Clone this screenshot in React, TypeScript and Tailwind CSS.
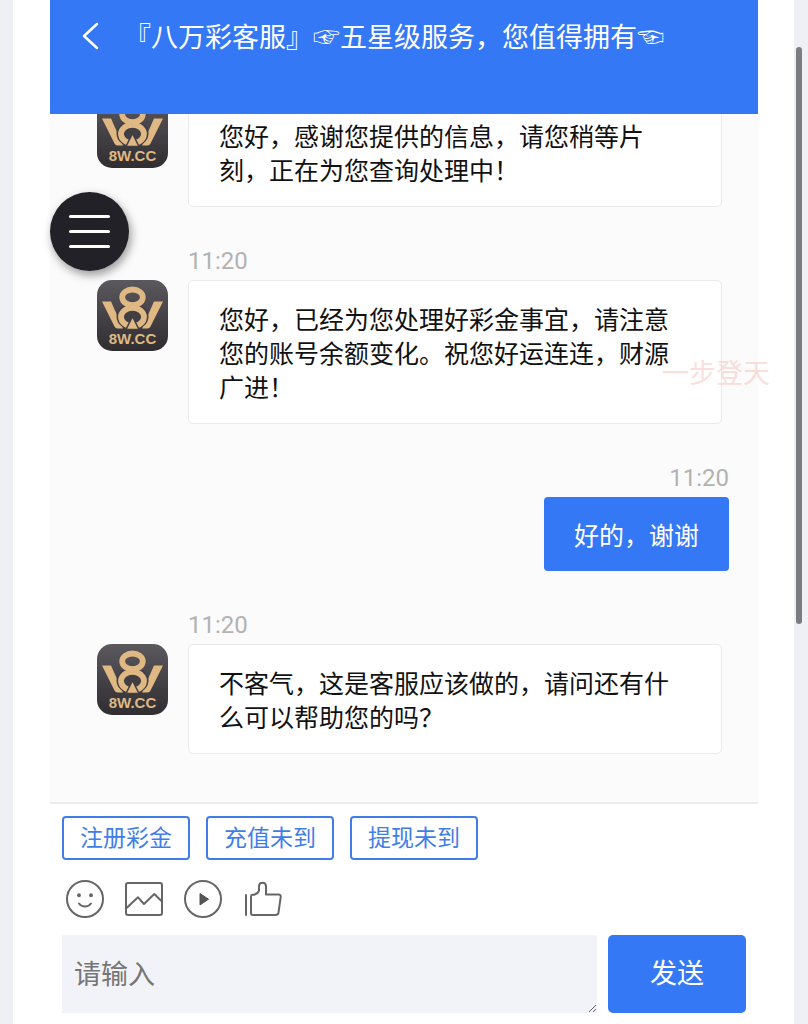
import React from "react";

type Message = {
  id: number;
  from: "agent" | "user";
  time?: string;
  text: string;
};

const messages: Message[] = [
  { id: 1, from: "agent", text: "您好，感谢您提供的信息，请您稍等片刻，正在为您查询处理中！" },
  { id: 2, from: "agent", time: "11:20", text: "您好，已经为您处理好彩金事宜，请注意您的账号余额变化。祝您好运连连，财源广进！" },
  { id: 3, from: "user", time: "11:20", text: "好的，谢谢" },
  { id: 4, from: "agent", time: "11:20", text: "不客气，这是客服应该做的，请问还有什么可以帮助您的吗？" },
];

const quickReplies = ["注册彩金", "充值未到", "提现未到"];

function Avatar() {
  return (
    <svg viewBox="0 0 71 71" className="size-[71px] shrink-0" role="img" aria-label="8W.CC">
      <defs>
        <linearGradient id="avatar-bg" x1="0" y1="0" x2="0" y2="1">
          <stop offset="0" stopColor="#5b595d" />
          <stop offset="0.6" stopColor="#403e42" />
          <stop offset="1" stopColor="#302e31" />
        </linearGradient>
      </defs>
      <rect width="71" height="71" rx="15" fill="url(#avatar-bg)" />
      <g fill="#dfb883">
        <path d="M5 21.5H14L26 48.5H20.500Q18.500 48.500 17.500 46.500Z" />
        <path d="M66 21.5H57L45 48.5H50.500Q52.500 48.500 53.500 46.500Z" />
      </g>
      <ellipse cx="35.500" cy="36.500" rx="16" ry="13.500" fill="#413f43" />
      <ellipse cx="35.500" cy="37" rx="11.500" ry="9.200" fill="none" stroke="#dfb883" strokeWidth="5.800" />
      <ellipse cx="35.500" cy="17.300" rx="10.300" ry="7.800" fill="none" stroke="#dfb883" strokeWidth="5.800" />
      <path d="M35.500 36.500L42 49.500H29Z" fill="#dfb883" stroke="#413f43" strokeWidth="1.500" />
      <text
        x="35.500"
        y="64"
        textAnchor="middle"
        className="fill-[#dfb883] font-['Liberation_Sans',sans-serif] text-[15px] font-bold"
      >
        8W.CC
      </text>
    </svg>
  );
}

function MessageRow({ message }: { message: Message }) {
  if (message.from === "user") {
    return (
      <article className="mt-9 flex flex-col items-end">
        <time className="font-[Roboto,sans-serif] text-[24px] leading-[37px] text-[#b2b2b2]">{message.time}</time>
        <p className="rounded-[4px] bg-[#3478f6] px-[30px] py-5 text-white">{message.text}</p>
      </article>
    );
  }
  return (
    <article className="mt-9">
      {message.time && (
        <time className="block pl-[91px] font-[Roboto,sans-serif] text-[24px] leading-[37px] text-[#b2b2b2]">
          {message.time}
        </time>
      )}
      <div className="flex items-start gap-5">
        <Avatar />
        <p className="mr-[7px] min-w-0 flex-1 rounded-[5px] border border-[#ebebeb] bg-white px-[30px] py-5 text-[#111]">
          {message.text}
        </p>
      </div>
    </article>
  );
}

const iconClass = "size-[40px]";

function SmileIcon() {
  return (
    <svg viewBox="0 0 40 40" className={iconClass} fill="none" stroke="#666" strokeWidth="2" strokeLinecap="round" aria-hidden="true">
      <circle cx="20" cy="20" r="18" />
      <path d="M14 24.500C17 28.500 23 28.500 26 24.500" />
      <circle cx="14" cy="16.300" r="1.200" fill="#666" strokeWidth="1.500" />
      <circle cx="26" cy="16.300" r="1.200" fill="#666" strokeWidth="1.500" />
    </svg>
  );
}

function ImageIcon() {
  return (
    <svg viewBox="0 0 40 40" className={iconClass} fill="none" stroke="#666" strokeWidth="2" strokeLinejoin="round" aria-hidden="true">
      <rect x="2" y="4" width="36" height="32" rx="2" />
      <path d="M2 29.500L14 18.300L20 25L30.300 15L38 22.500" />
    </svg>
  );
}

function PlayIcon() {
  return (
    <svg viewBox="0 0 40 40" className={iconClass} fill="none" stroke="#666" strokeWidth="2" aria-hidden="true">
      <circle cx="20" cy="20" r="18" />
      <path d="M17 14.500L25.500 20.200L17 26Z" fill="#555" stroke="#555" strokeWidth="1" />
    </svg>
  );
}

function ThumbIcon() {
  return (
    <svg viewBox="0 0 40 40" className={iconClass} fill="none" stroke="#666" strokeWidth="2" strokeLinecap="round" strokeLinejoin="round" aria-hidden="true">
      <path d="M4 16V36M9 17.500Q9 16 10.500 15.800Q16 15.500 17 11.500V7Q17.200 3.700 20.500 3.700Q23.800 3.700 24 7V15.500H36.500Q39 15.500 38.700 18L36.500 33.500Q36 36 33.500 36H11Q9 36 9 34Z" />
    </svg>
  );
}

const tools = [
  { label: "表情", icon: <SmileIcon /> },
  { label: "图片", icon: <ImageIcon /> },
  { label: "视频", icon: <PlayIcon /> },
  { label: "点赞", icon: <ThumbIcon /> },
];

export default function App() {
  return (
    <div className="relative h-screen bg-[#eff0f5] pr-[14px] pl-[13px] font-['Noto_Sans_CJK_SC',sans-serif]">
      <main className="flex h-full flex-col bg-white pr-9 pl-[37px]">
        <header className="flex h-[114px] shrink-0 items-start bg-[#3478f6] pt-4 pl-[30px] text-white">
          <button type="button" aria-label="返回" className="flex h-10 w-11 items-center">
            <svg viewBox="0 0 20 30" className="h-[30px] w-5" fill="none" stroke="currentColor" strokeWidth="2.500" strokeLinecap="round" strokeLinejoin="round" aria-hidden="true">
              <path d="M17 3L4 15L17 27" />
            </svg>
          </button>
          <h1 className="text-[27px] leading-10 whitespace-nowrap">『八万彩客服』☞五星级服务，您值得拥有☜</h1>
        </header>

        <section
          aria-label="聊天记录"
          className="flex min-h-0 flex-1 flex-col justify-end overflow-hidden border-b-2 border-[#ececec] bg-[#fbfbfb] pr-[29px] pb-12 pl-[47px] text-[25px] leading-[34px]"
        >
          {messages.map((message) => (
            <MessageRow key={message.id} message={message} />
          ))}
        </section>

        <footer className="shrink-0 px-3 pt-3 pb-[11px]">
          <div className="flex gap-4">
            {quickReplies.map((label) => (
              <button
                key={label}
                type="button"
                className="h-11 w-32 rounded-[4px] border-2 border-[#3f7ee8] pb-1 text-[23px] leading-8 text-[#3f7ee8]"
              >
                {label}
              </button>
            ))}
          </div>
          <div className="mt-[19px] flex gap-[19px] pl-[3px]">
            {tools.map((tool) => (
              <button key={tool.label} type="button" aria-label={tool.label}>
                {tool.icon}
              </button>
            ))}
          </div>
          <form className="mt-4 flex gap-[11px]" onSubmit={(event) => event.preventDefault()}>
            <textarea
              aria-label="请输入"
              placeholder="请输入"
              className="block h-[78px] min-w-0 flex-1 bg-[#f2f3f8] px-3 py-[18px] text-[27px] leading-10 text-[#222] placeholder:text-[#757575]"
            />
            <button type="submit" className="w-[138px] rounded-[5px] bg-[#3478f6] pb-1 text-[27px] text-white">
              发送
            </button>
          </form>
        </footer>
      </main>

      <button
        type="button"
        aria-label="菜单"
        className="absolute top-[192px] left-[50px] flex size-[79px] flex-col items-center justify-center gap-3 rounded-full bg-[#222127] shadow-[2px_4px_10px_rgba(0,0,0,0.4)]"
      >
        <span className="h-[3px] w-[41px] rounded-full bg-white" />
        <span className="h-[3px] w-[41px] rounded-full bg-white" />
        <span className="h-[3px] w-[41px] rounded-full bg-white" />
      </button>

      <span className="pointer-events-none absolute top-[352px] right-[38px] text-[27px] leading-10 text-[#f4b8b0]/45">
        一步登天
      </span>
      <div className="absolute top-[47px] right-[6px] h-[577px] w-[6px] rounded-full bg-[#7b7c80]" />
    </div>
  );
}
